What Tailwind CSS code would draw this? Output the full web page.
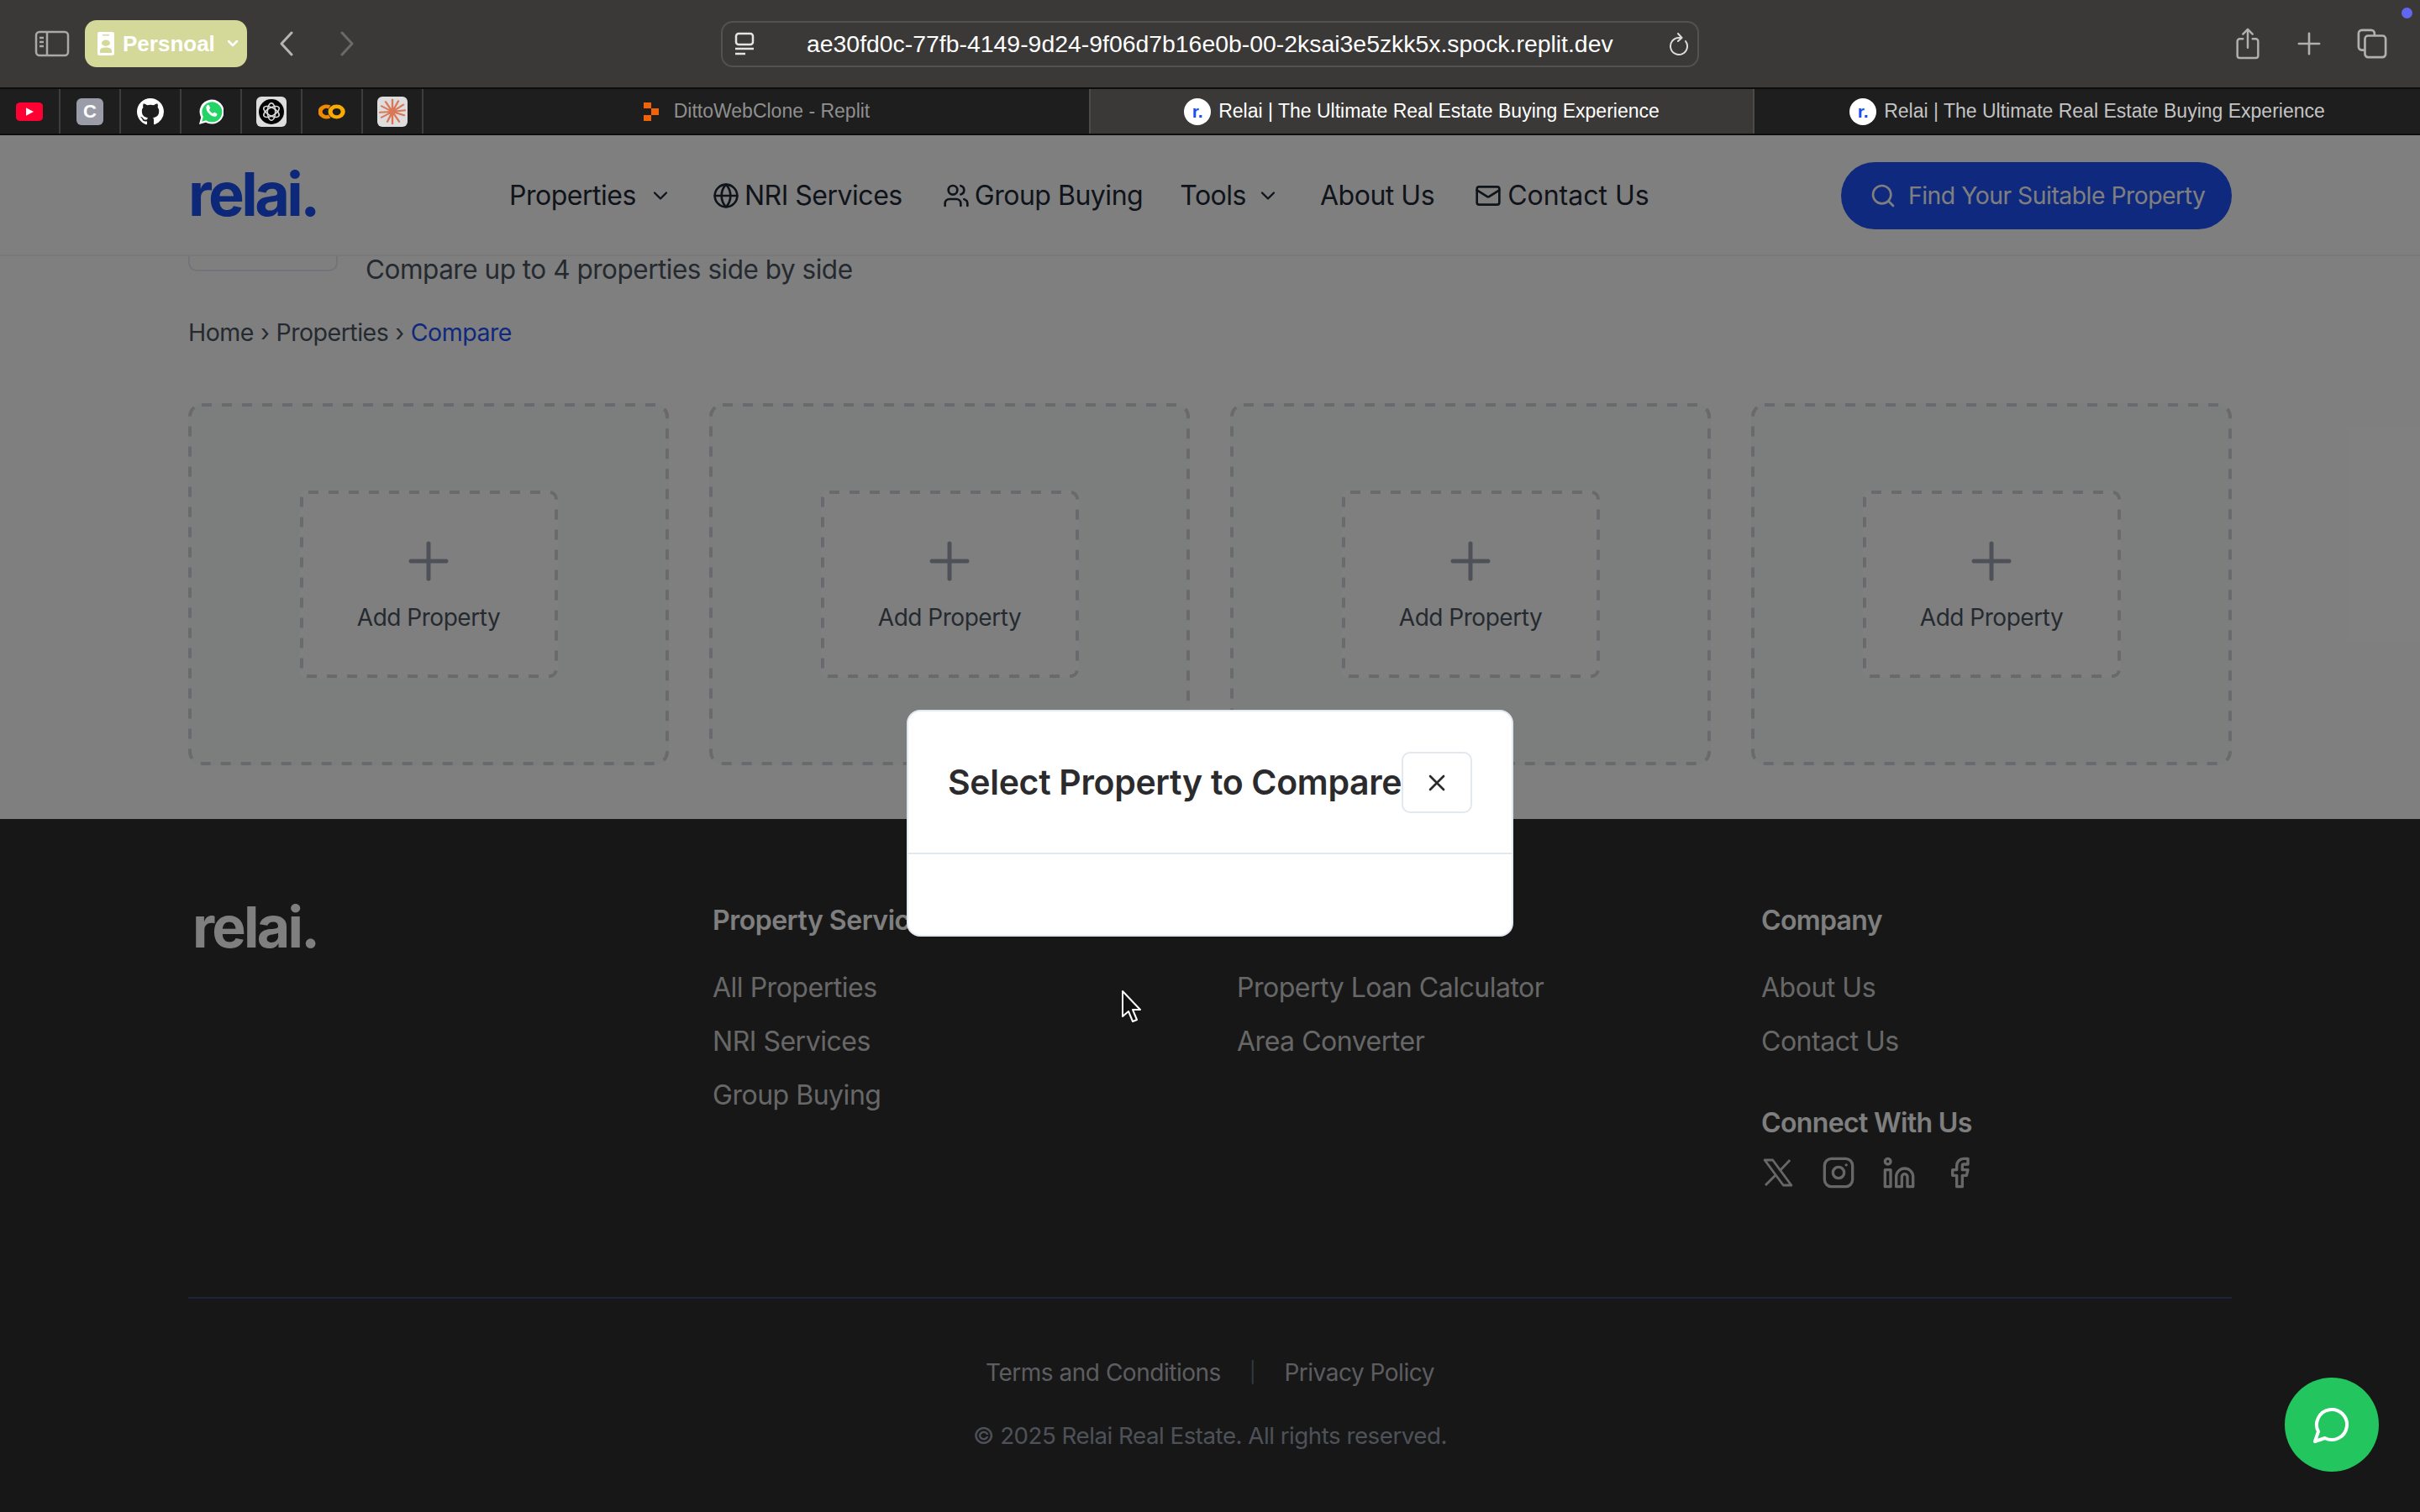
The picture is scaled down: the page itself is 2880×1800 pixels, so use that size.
<!DOCTYPE html>
<html lang="en">
<head>
    <meta charset="UTF-8">
    <title>Relai | The Ultimate Real Estate Buying Experience</title>
    <script src="https://cdn.jsdelivr.net/npm/@tailwindcss/browser@4"></script>
</head>
<body class="w-[2880px] h-[1800px] overflow-hidden bg-white font-['Inter',sans-serif]">
    <div class="flex flex-col h-[1800px]">
        <!-- Browser toolbar -->
        <div class="h-[104px] shrink-0 bg-[#3a3937] flex items-center relative font-['Liberation_Sans',sans-serif]">
            <svg class="ml-[41px] w-[42px] h-[32px]" viewBox="0 0 42 32" fill="none" stroke="#a9a9a7" stroke-width="2.5">
                <rect x="2" y="2" width="38" height="28" rx="4"/>
                <path d="M15 2v28M6 9h5M6 14h5M6 19h5"/>
            </svg>
            <div class="ml-[18px] w-[193px] h-[56px] rounded-[14px] bg-[#d4d899] flex items-center pl-[15px] text-white font-bold text-[26px]">
                <svg class="w-[20px] h-[28px] shrink-0" viewBox="0 0 20 38" preserveAspectRatio="none" fill="#fff">
                    <path fill-rule="evenodd" d="M3 0h14a3 3 0 0 1 3 3v32a3 3 0 0 1-3 3H3a3 3 0 0 1-3-3V3a3 3 0 0 1 3-3zm3 4v2h8V4zm4 9a5 5 0 1 0 0 10 5 5 0 0 0 0-10zM3 34h14v-4c0-3-3-5-7-5s-7 2-7 5z"/>
                </svg>
                <span class="ml-[10px]">Persnoal</span>
                <svg class="ml-[14px] w-[14px] h-[10px]" viewBox="0 0 14 10" fill="none" stroke="#fff" stroke-width="2.5" stroke-linecap="round" stroke-linejoin="round"><path d="M2 2l5 5 5-5"/></svg>
            </div>
            <svg class="ml-[38px] w-[18px] h-[30px]" viewBox="0 0 18 30" fill="none" stroke="#b5b5b3" stroke-width="3" stroke-linecap="round" stroke-linejoin="round"><path d="M15 2L3 15l12 13"/></svg>
            <svg class="ml-[54px] w-[18px] h-[30px]" viewBox="0 0 18 30" fill="none" stroke="#6a6a68" stroke-width="3" stroke-linecap="round" stroke-linejoin="round"><path d="M3 2l12 13L3 28"/></svg>

            <!-- Address bar -->
            <div class="ml-[436px] w-[1164px] h-[55px] rounded-[14px] border-2 border-[#525250] flex items-center text-white relative">
                <svg class="ml-[14px] w-[24px] h-[28px] shrink-0" viewBox="0 0 24 28" fill="none" stroke="#e4e4e2" stroke-width="2.5">
                    <rect x="2" y="2" width="20" height="13" rx="3"/>
                    <path d="M1 20h22M1 26h12"/>
                </svg>
                <span class="ml-[62px] text-[28.4px] whitespace-nowrap">ae30fd0c-77fb-4149-9d24-9f06d7b16e0b-00-2ksai3e5zkk5x.spock.replit.dev</span>
                <svg class="absolute right-[10px] top-[12px] w-[24px] h-[28px]" viewBox="0 0 24 28" fill="none" stroke="#dcdcda" stroke-width="2" stroke-linecap="round" stroke-linejoin="round">
                    <path d="M20 10a10 10 0 1 1-8-4h3M11 1l4.500 5L11 10"/>
                </svg>
            </div>

            <!-- Toolbar actions -->
            <svg class="ml-[638px] w-[30px] h-[38px]" viewBox="0 0 30 40" fill="none" stroke="#b0b0ae" stroke-width="2.6" stroke-linecap="round" stroke-linejoin="round">
                <path d="M9 14H5a3 3 0 0 0-3 3v18a3 3 0 0 0 3 3h20a3 3 0 0 0 3-3V17a3 3 0 0 0-3-3h-4M15 25V2M9 8l6-6 6 6"/>
            </svg>
            <svg class="ml-[44px] w-[28px] h-[28px]" viewBox="0 0 30 30" fill="none" stroke="#b0b0ae" stroke-width="2.8" stroke-linecap="round"><path d="M15 2v26M2 15h26"/></svg>
            <svg class="ml-[43px] w-[36px] h-[36px]" viewBox="0 0 38 38" fill="none" stroke="#b0b0ae" stroke-width="2.8">
                <path d="M9 27H6a4 4 0 0 1-4-4V6a4 4 0 0 1 4-4h12a4 4 0 0 1 4 4v3"/>
                <rect x="10" y="9" width="26" height="27" rx="4"/>
            </svg>
            <span class="absolute right-[9px] top-[9px] w-[13px] h-[13px] rounded-full bg-[#6366f1]"></span>
        </div>

        <!-- Tab strip -->
        <div class="h-[57px] shrink-0 flex bg-[#1e1e1e] border-y-2 border-[#0d0d0d] font-['Liberation_Sans',sans-serif] text-[23px]">
            <div class="w-[72px] border-r-2 border-[#3d3d3d] flex items-center justify-center">
                <svg class="w-[32px] h-[22px]" viewBox="0 0 32 26" preserveAspectRatio="none"><rect width="32" height="26" rx="5" fill="#ff0033"/><path d="M12 7.500l9 5.500-9 5.500z" fill="#fff"/></svg>
            </div>
            <div class="w-[72px] border-r-2 border-[#3d3d3d] flex items-center justify-center">
                <div class="w-[32px] h-[32px] rounded-[6px] bg-[#9a9ca8] flex items-center justify-center text-white font-bold text-[22px]">C</div>
            </div>
            <div class="w-[72px] border-r-2 border-[#3d3d3d] flex items-center justify-center">
                <svg class="w-[32px] h-[32px]" viewBox="0 0 16 16"><path fill="#fff" d="M8 0C3.580 0 0 3.580 0 8c0 3.540 2.290 6.530 5.470 7.590.4.070.55-.17.55-.38 0-.19-.01-.82-.01-1.490-2.010.37-2.530-.49-2.690-.94-.09-.23-.48-.94-.82-1.130-.28-.15-.68-.52-.01-.53.630-.01 1.080.58 1.230.82.720 1.210 1.870.87 2.330.66.070-.52.280-.87.510-1.070-1.780-.2-3.640-.89-3.640-3.950 0-.87.310-1.590.820-2.150-.08-.2-.36-1.020.08-2.120 0 0 .67-.21 2.200.82.640-.18 1.320-.27 2-.27s1.360.09 2 .27c1.530-1.040 2.200-.82 2.200-.82.440 1.100.160 1.920.080 2.120.510.560.820 1.270.820 2.150 0 3.070-1.870 3.750-3.650 3.950.290.250.540.730.540 1.480 0 1.070-.01 1.930-.01 2.200 0 .210.150.460.550.380A8.010 8.010 0 0 0 16 8c0-4.420-3.580-8-8-8z"/></svg>
            </div>
            <div class="w-[72px] border-r-2 border-[#3d3d3d] flex items-center justify-center">
                <svg class="w-[30px] h-[32px]" viewBox="0 0 32 34">
                    <path fill="#fff" d="M1 33l2.400-8.800A15.500 15.500 0 1 1 9.500 30.500z"/>
                    <path fill="#25d366" d="M4.500 29.500l1.700-6A12.800 12.800 0 1 1 10 27.800z"/>
                    <path fill="#fff" d="M11 9c1-1 2-1 2.700 0l1.300 3c.3 1-.8 1.800-1.200 2.600 1 2.200 2.700 3.600 4.600 4.500 1-.5 1.600-1.600 2.500-1.200l2.800 1.700c.6.900 0 2.300-1.400 3.200-4.600 1.800-12.800-5.400-12.300-11.400 0-.9.500-1.800 1-2.400z"/>
                </svg>
            </div>
            <div class="w-[72px] border-r-2 border-[#3d3d3d] flex items-center justify-center">
                <div class="w-[36px] h-[36px] rounded-[6px] bg-[#dddddd] flex items-center justify-center">
                    <div class="w-[30px] h-[30px] rounded-full bg-black flex items-center justify-center">
                        <svg class="w-[24px] h-[24px]" viewBox="0 0 26 28" fill="none" stroke="#dcdcdc" stroke-width="1.800">
                            <ellipse cx="13" cy="14" rx="5.500" ry="12"/>
                            <ellipse cx="13" cy="14" rx="5.500" ry="12" transform="rotate(60 13 14)"/>
                            <ellipse cx="13" cy="14" rx="5.500" ry="12" transform="rotate(120 13 14)"/>
                        </svg>
                    </div>
                </div>
            </div>
            <div class="w-[72px] border-r-2 border-[#3d3d3d] flex items-center justify-center">
                <svg class="w-[32px] h-[22px]" viewBox="0 0 34 28" preserveAspectRatio="none" fill="none" stroke-width="5.500">
                    <path d="M14 7a8 8 0 1 0 0 14" stroke="#f08a00"/>
                    <circle cx="23" cy="14" r="8" stroke="#f9ab00"/>
                </svg>
            </div>
            <div class="w-[72px] border-r-2 border-[#3d3d3d] flex items-center justify-center">
                <div class="w-[36px] h-[36px] rounded-[6px] bg-[#dddddd] flex items-center justify-center">
                    <svg class="w-[32px] h-[32px]" viewBox="0 0 32 38" preserveAspectRatio="none" fill="none" stroke="#d97757" stroke-width="2.400" stroke-linecap="round">
                        <path d="M16 19L16 2M16 19L23 4M16 19L29 9M16 19L31 17M16 19L30 24M16 19L24 33M16 19L16 36M16 19L10 33M16 19L3 27M16 19L1 20M16 19L3 11M16 19L8 5"/>
                    </svg>
                </div>
            </div>

            <div class="w-[792px] flex items-center justify-center text-[#8f8f8f]">
                <svg class="w-[20px] h-[24px] mr-[17px]" viewBox="0 0 20 24" fill="#f26207"><path d="M1 1h9v7H1zM10 8h9v8h-9zM1 16h9v7H1z"/></svg>
                <span>DittoWebClone - Replit</span>
            </div>
            <div class="w-[792px] flex items-center justify-center bg-[#3a3937] border-x-2 border-[#4a4a48] text-white">
                <span class="w-[32px] h-[32px] rounded-full bg-white flex items-center justify-center text-[#1652f0] font-bold text-[21px] mr-[9px]">r.</span>
                <span>Relai | The Ultimate Real Estate Buying Experience</span>
            </div>
            <div class="flex-1 flex items-center justify-center text-[#c4c4c4]">
                <span class="w-[32px] h-[32px] rounded-full bg-white flex items-center justify-center text-[#1652f0] font-bold text-[21px] mr-[9px]">r.</span>
                <span>Relai | The Ultimate Real Estate Buying Experience</span>
            </div>
        </div>

        <!-- Page -->
        <div class="relative flex-1 flex flex-col overflow-hidden tracking-[-0.03em]">
            <!-- Nav -->
            <header class="h-[144px] shrink-0 bg-white border-b-2 border-[#f2f2f2] flex items-center px-[224px] pt-[2px]">
                <div class="w-[382px] text-[#1a50f0] font-bold text-[72px] tracking-[-0.05em] leading-none -mt-[5px]">relai.</div>
                <nav class="flex items-center gap-12 text-[32px] text-[#1f2937]">
                    <div class="flex items-center gap-[15px]">Properties
                        <svg class="w-[28px] h-[28px]" viewBox="0 0 24 24" fill="none" stroke="currentColor" stroke-width="2" stroke-linecap="round" stroke-linejoin="round"><path d="m6 9 6 6 6-6"/></svg>
                    </div>
                    <div class="flex items-center gap-[6px]">
                        <svg class="w-[32px] h-[32px]" viewBox="0 0 24 24" fill="none" stroke="currentColor" stroke-width="2" stroke-linecap="round" stroke-linejoin="round"><circle cx="12" cy="12" r="10"/><path d="M12 2a14.500 14.500 0 0 0 0 20 14.500 14.500 0 0 0 0-20M2 12h20"/></svg>
                        NRI Services
                    </div>
                    <div class="flex items-center gap-[6px]">
                        <svg class="w-[32px] h-[32px]" viewBox="0 0 24 24" fill="none" stroke="currentColor" stroke-width="2" stroke-linecap="round" stroke-linejoin="round"><path d="M16 21v-2a4 4 0 0 0-4-4H6a4 4 0 0 0-4 4v2"/><circle cx="9" cy="7" r="4"/><path d="M22 21v-2a4 4 0 0 0-3-3.870M16 3.130a4 4 0 0 1 0 7.750"/></svg>
                        Group Buying
                    </div>
                    <div class="-ml-[4px] flex items-center gap-[12px]">Tools
                        <svg class="w-[28px] h-[28px]" viewBox="0 0 24 24" fill="none" stroke="currentColor" stroke-width="2" stroke-linecap="round" stroke-linejoin="round"><path d="m6 9 6 6 6-6"/></svg>
                    </div>
                    <div>About Us</div>
                    <div class="flex items-center gap-[7px] tracking-[0em]">
                        <svg class="w-[32px] h-[32px]" viewBox="0 0 24 24" fill="none" stroke="currentColor" stroke-width="2" stroke-linecap="round" stroke-linejoin="round"><rect x="2" y="4" width="20" height="16" rx="2"/><path d="m22 7-8.970 5.700a1.940 1.940 0 0 1-2.060 0L2 7"/></svg>
                        Contact Us
                    </div>
                </nav>
                <button class="ml-auto w-[465px] h-[80px] rounded-full bg-[#1c52fa] text-white text-[28.3px] flex items-center pl-[34px] gap-[14px]">
                    <svg class="w-[32px] h-[32px]" viewBox="0 0 24 24" fill="none" stroke="currentColor" stroke-width="2" stroke-linecap="round" stroke-linejoin="round"><circle cx="11" cy="11" r="8"/><path d="m21 21-4.300-4.300"/></svg>
                    Find Your Suitable Property
                </button>
            </header>

            <!-- Compare -->
            <main class="h-[670px] shrink-0 bg-white px-[224px]">
                <div class="flex items-start gap-[33px]">
                    <div class="w-[178px] h-[18px] border-2 border-t-0 border-[#e2e8f0] rounded-b-[10px]"></div>
                    <p class="text-[31.5px] leading-[32px] whitespace-nowrap text-[#4b5563]">Compare up to 4 properties side by side</p>
                </div>
                <div class="mt-[41px] flex items-center gap-[8px] text-[28.5px] leading-[36px] text-[#4b5563]">
                    <span>Home</span><span>›</span><span>Properties</span><span>›</span><span class="text-[#1c52fa]">Compare</span>
                </div>
                <div class="mt-[66px] grid grid-cols-4 gap-12">
                    <div class="relative h-[431px] rounded-[16px] bg-[#f9fcfa] flex items-center justify-center">
                        <svg class="absolute inset-0 w-full h-full" fill="none" stroke="#d2d2dc" stroke-width="4" stroke-dasharray="12 12"><rect x="2" y="2" width="568" height="427" rx="14"/></svg>
                        <div class="relative w-[307px] h-[223px] rounded-[8px] bg-white flex flex-col items-center justify-center pt-[6px] text-[#4b5563]">
                            <svg class="absolute inset-0 w-full h-full" fill="none" stroke="#d2d2dc" stroke-width="4" stroke-dasharray="12 12"><rect x="2" y="2" width="303" height="219" rx="8"/></svg>
                            <svg class="w-[48px] h-[48px] text-[#9ca3af]" viewBox="0 0 48 48" fill="none" stroke="currentColor" stroke-width="5" stroke-linecap="round"><path d="M24 3v42M3 24h42"/></svg>
                            <span class="mt-[25px] text-[28px] leading-[36px]">Add Property</span>
                        </div>
                    </div>
                    <div class="relative h-[431px] rounded-[16px] bg-[#f9fcfa] flex items-center justify-center">
                        <svg class="absolute inset-0 w-full h-full" fill="none" stroke="#d2d2dc" stroke-width="4" stroke-dasharray="12 12"><rect x="2" y="2" width="568" height="427" rx="14"/></svg>
                        <div class="relative w-[307px] h-[223px] rounded-[8px] bg-white flex flex-col items-center justify-center pt-[6px] text-[#4b5563]">
                            <svg class="absolute inset-0 w-full h-full" fill="none" stroke="#d2d2dc" stroke-width="4" stroke-dasharray="12 12"><rect x="2" y="2" width="303" height="219" rx="8"/></svg>
                            <svg class="w-[48px] h-[48px] text-[#9ca3af]" viewBox="0 0 48 48" fill="none" stroke="currentColor" stroke-width="5" stroke-linecap="round"><path d="M24 3v42M3 24h42"/></svg>
                            <span class="mt-[25px] text-[28px] leading-[36px]">Add Property</span>
                        </div>
                    </div>
                    <div class="relative h-[431px] rounded-[16px] bg-[#f9fcfa] flex items-center justify-center">
                        <svg class="absolute inset-0 w-full h-full" fill="none" stroke="#d2d2dc" stroke-width="4" stroke-dasharray="12 12"><rect x="2" y="2" width="568" height="427" rx="14"/></svg>
                        <div class="relative w-[307px] h-[223px] rounded-[8px] bg-white flex flex-col items-center justify-center pt-[6px] text-[#4b5563]">
                            <svg class="absolute inset-0 w-full h-full" fill="none" stroke="#d2d2dc" stroke-width="4" stroke-dasharray="12 12"><rect x="2" y="2" width="303" height="219" rx="8"/></svg>
                            <svg class="w-[48px] h-[48px] text-[#9ca3af]" viewBox="0 0 48 48" fill="none" stroke="currentColor" stroke-width="5" stroke-linecap="round"><path d="M24 3v42M3 24h42"/></svg>
                            <span class="mt-[25px] text-[28px] leading-[36px]">Add Property</span>
                        </div>
                    </div>
                    <div class="relative h-[431px] rounded-[16px] bg-[#f9fcfa] flex items-center justify-center">
                        <svg class="absolute inset-0 w-full h-full" fill="none" stroke="#d2d2dc" stroke-width="4" stroke-dasharray="12 12"><rect x="2" y="2" width="568" height="427" rx="14"/></svg>
                        <div class="relative w-[307px] h-[223px] rounded-[8px] bg-white flex flex-col items-center justify-center pt-[6px] text-[#4b5563]">
                            <svg class="absolute inset-0 w-full h-full" fill="none" stroke="#d2d2dc" stroke-width="4" stroke-dasharray="12 12"><rect x="2" y="2" width="303" height="219" rx="8"/></svg>
                            <svg class="w-[48px] h-[48px] text-[#9ca3af]" viewBox="0 0 48 48" fill="none" stroke="currentColor" stroke-width="5" stroke-linecap="round"><path d="M24 3v42M3 24h42"/></svg>
                            <span class="mt-[25px] text-[28px] leading-[36px]">Add Property</span>
                        </div>
                    </div>
                </div>
            </main>

            <!-- Footer -->
            <footer class="flex-1 bg-[#2e2e2e] px-[224px] pt-[97px] text-[#cfcfcf]">
                <div class="grid grid-cols-4 gap-16 h-[474px] border-b-2 border-[#3a4a70]">
                    <div class="pl-[5px] -mt-[3px] text-white font-bold text-[68px] tracking-[-0.04em] leading-none">relai.</div>
                    <div>
                        <h3 class="text-white font-semibold text-[32px] leading-[48px]">Property Services</h3>
                        <ul class="mt-[36px] space-y-[24px] text-[32px] leading-[40px]">
                            <li>All Properties</li>
                            <li>NRI Services</li>
                            <li>Group Buying</li>
                        </ul>
                    </div>
                    <div>
                        <h3 class="text-white font-semibold text-[32px] leading-[48px]">Tools</h3>
                        <ul class="mt-[36px] space-y-[24px] text-[32px] leading-[40px]">
                            <li>Property Loan Calculator</li>
                            <li>Area Converter</li>
                        </ul>
                    </div>
                    <div>
                        <h3 class="text-white font-semibold text-[32px] tracking-[-0.02em] leading-[48px]">Company</h3>
                        <ul class="mt-[36px] space-y-[24px] text-[32px] leading-[40px]">
                            <li>About Us</li>
                            <li>Contact Us</li>
                        </ul>
                        <h3 class="mt-[53px] text-white font-semibold text-[32px] tracking-[-0.02em] leading-[48px]">Connect With Us</h3>
                        <div class="mt-[15px] flex items-center gap-[32px] text-[#cfcfcf]">
                            <svg class="w-[40px] h-[40px]" viewBox="0 0 24 24" fill="none" stroke="currentColor" stroke-width="1.700" stroke-linejoin="round"><path d="M2.500 3h5.700l13.300 18h-5.700zM20.500 3l-7.500 8M10.500 13.500 3 21"/></svg>
                            <svg class="w-[40px] h-[40px]" viewBox="0 0 24 24" fill="none" stroke="currentColor" stroke-width="2" stroke-linecap="round" stroke-linejoin="round"><rect x="2" y="2" width="20" height="20" rx="5"/><circle cx="12" cy="12" r="4"/><path d="M17.500 6.500h.01"/></svg>
                            <svg class="w-[40px] h-[40px]" viewBox="0 0 24 24" fill="none" stroke="currentColor" stroke-width="2" stroke-linejoin="round"><rect x="2" y="10" width="4" height="12"/><circle cx="4" cy="4" r="2"/><path d="M10 22V15a6 6 0 0 1 12 0v7h-4v-7a2 2 0 0 0-4 0v7z"/></svg>
                            <svg class="w-[40px] h-[40px]" viewBox="0 0 24 24" fill="none" stroke="currentColor" stroke-width="2" stroke-linejoin="round"><path d="M18 2h-3a5 5 0 0 0-5 5v3H7v4h3v8h4v-8h3l1-4h-4V7a1 1 0 0 1 1-1h3z"/></svg>
                        </div>
                    </div>
                </div>
                <div class="mt-[70px] flex justify-center items-center text-[28px] leading-[36px] text-[#b8bac0]">
                    <span>Terms and Conditions</span>
                    <span class="mx-[34px] text-[24px] text-[#6b7280]">|</span>
                    <span>Privacy Policy</span>
                </div>
                <p class="mt-[39px] text-center text-[27.7px] leading-[36px] text-[#9ca3af]">© 2025 Relai Real Estate. All rights reserved.</p>
            </footer>

            <!-- Dialog overlay -->
            <div class="absolute inset-0 bg-black/50"></div>
            <div class="absolute left-[1079px] top-[684px] w-[722px] h-[270px] bg-white rounded-[16px] border-2 border-[#e2e8f0] tracking-[-0.02em]">
                <div class="h-[170px] border-b-2 border-[#e2e8f0] flex items-center pl-[47px] pt-[2px]">
                    <h2 class="text-[41px] font-semibold text-[#2b2b2e] whitespace-nowrap">Select Property to Compare</h2>
                    <button class="absolute left-[587px] top-[48px] w-[84px] h-[73px] rounded-[10px] border-2 border-[#e2e8f0] bg-white flex items-center justify-center">
                        <svg class="w-[32px] h-[32px] text-[#2b2b2e]" viewBox="0 0 24 24" fill="none" stroke="currentColor" stroke-width="2" stroke-linecap="round"><path d="M18 6 6 18M6 6l12 12"/></svg>
                    </button>
                </div>
            </div>

            <!-- Chat button -->
            <button class="absolute left-[2719px] top-[1479px] w-[112px] h-[112px] rounded-full bg-[#22c55e] flex items-center justify-center">
                <svg class="w-[48px] h-[48px]" viewBox="0 0 24 24" fill="none" stroke="#fff" stroke-width="2" stroke-linecap="round" stroke-linejoin="round"><path d="M7.900 20A9 9 0 1 0 4 16.100L2 22z"/></svg>
            </button>

            <!-- Mouse pointer -->
            <svg class="absolute left-[1333px] top-[1017px] w-[26px] h-[40px]" viewBox="0 0 26 40">
                <path d="M3 2v30l7-6 5 12 5-2-5-12h9z" fill="#111" stroke="#fff" stroke-width="2" stroke-linejoin="round"/>
            </svg>
        </div>
    </div>
</body>
</html>
